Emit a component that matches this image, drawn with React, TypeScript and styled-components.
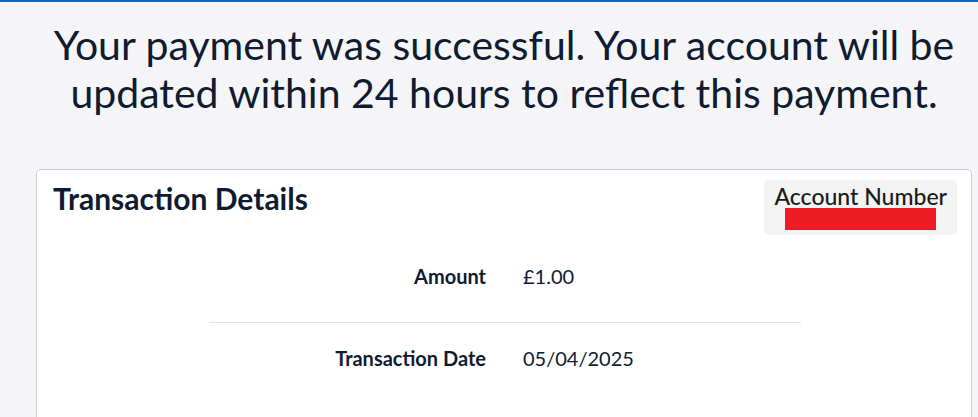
import React from 'react';
import styled, { createGlobalStyle } from 'styled-components';

const GlobalStyle = createGlobalStyle`
  html, body {
    margin: 0;
    padding: 0;
    background: #f5f5f7;
    font-family: Lato, "Noto Sans", sans-serif;
    color: #0e1b31;
  }
`;

const Page = styled.div`
  border-top: 2px solid #0a66c8;
  height: 415px;
  overflow: hidden;
  padding: 19px 6px 0 36px;
`;

const Headline = styled.h1`
  margin: 0 0 52px;
  font-size: 41px;
  font-weight: 400;
  line-height: 48px;
  text-align: center;
  color: #0e1b31;
`;

const Card = styled.section`
  background: #ffffff;
  border: 1px solid #c9cdd6;
  border-radius: 5px;
  padding: 10px 14px 40px 16px;
`;

const CardHeader = styled.div`
  display: flex;
  justify-content: space-between;
  align-items: flex-start;
`;

const CardTitle = styled.h2`
  margin: 1px 0 0;
  font-size: 30px;
  font-weight: 700;
  line-height: 34px;
`;

const AccountBox = styled.div`
  background: #f3f3f3;
  border-radius: 5px;
  padding: 4px 10px 5px;
  display: flex;
  flex-direction: column;
  align-items: center;
`;

const AccountLabel = styled.div`
  font-size: 23px;
  font-weight: 500;
  line-height: 24px;
  color: #1a1a1a;
`;

const Redacted = styled.div`
  width: 151px;
  height: 22px;
  background: #ed1c24;
`;

const Rows = styled.div`
  width: 592px;
  margin: 17px 0 0 156px;
`;

const Row = styled.div`
  display: grid;
  grid-template-columns: 277px 1fr;
  column-gap: 37px;
  align-items: center;
  padding: 12px 0;
  line-height: 24px;
`;

const Divider = styled.hr`
  border: 0;
  border-top: 1px solid #e2e2e2;
  margin: 22px 0 11px;
`;

const Label = styled.div`
  text-align: right;
  font-size: 20px;
  font-weight: 700;
`;

const Value = styled.div`
  font-size: 20px;
  font-weight: 400;
`;

export default function App() {
  const rows = [
    { label: 'Amount', value: '£1.00' },
    { label: 'Transaction Date', value: '05/04/2025' },
  ];
  return (
    <>
      <GlobalStyle />
      <Page>
        <Headline>
          Your payment was successful. Your account will be
          <br />
          updated within 24 hours to reflect this payment.
        </Headline>
        <Card>
          <CardHeader>
            <CardTitle>Transaction Details</CardTitle>
            <AccountBox>
              <AccountLabel>Account Number</AccountLabel>
              <Redacted />
            </AccountBox>
          </CardHeader>
          <Rows>
            {rows.map((r, i) => (
              <React.Fragment key={r.label}>
                {i > 0 && <Divider />}
                <Row>
                  <Label>{r.label}</Label>
                  <Value>{r.value}</Value>
                </Row>
              </React.Fragment>
            ))}
          </Rows>
        </Card>
      </Page>
    </>
  );
}
